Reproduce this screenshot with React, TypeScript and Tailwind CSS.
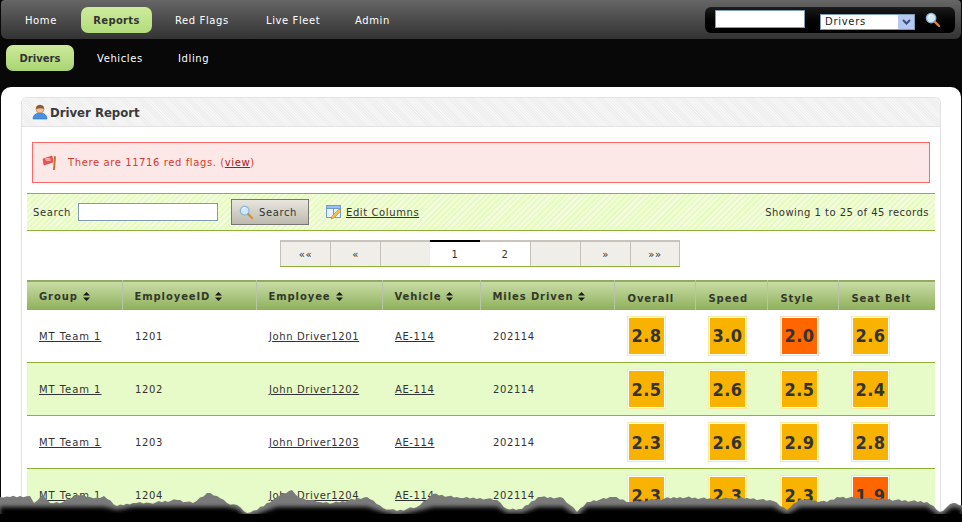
import React from 'react';

const rows = [
  { id: '1201', scores: ['2.8', '3.0', '2.0', '2.6'] },
  { id: '1202', scores: ['2.5', '2.6', '2.5', '2.4'] },
  { id: '1203', scores: ['2.3', '2.6', '2.9', '2.8'] },
  { id: '1204', scores: ['2.3', '2.3', '2.3', '1.9'] },
];

// rough outline of the torn paper edge, read off the screenshot
const tear = [
  [0, 497], [10, 497], [30, 496], [34, 503], [42, 495], [50, 503], [63, 502], [77, 495], [90, 497], [100, 498], [104, 496],
  [117, 506], [133, 503], [150, 503], [177, 500], [193, 503], [207, 493], [217, 496], [227, 503], [237, 505], [247, 513],
  [257, 510], [277, 497], [292, 490], [300, 498], [320, 502], [333, 503], [367, 497], [383, 508], [397, 511], [417, 507],
  [433, 494], [460, 498], [480, 498], [497, 500], [507, 509], [522, 509], [538, 497], [563, 498], [577, 512], [587, 502],
  [613, 497], [630, 502], [680, 497], [713, 499], [747, 498], [773, 501], [787, 510], [800, 499], [827, 502], [837, 497],
  [880, 499], [927, 502], [940, 512], [953, 503], [962, 505],
];

const jagged = tear.flatMap(([x, y], i) => {
  const next = tear[i + 1];
  if (!next) return [`${x},${y}`];
  const pts = [`${x},${y}`];
  const steps = Math.floor((next[0] - x) / 3);
  for (let s = 1; s < steps; s++) {
    const t = s / steps;
    const wob = ((i * 7 + s * 13) % 5) * 0.5 - 1;
    pts.push(`${(x + (next[0] - x) * t).toFixed(1)},${(y + (next[1] - y) * t + wob).toFixed(1)}`);
  }
  return pts;
});

// the shadow: thick grey on the peaks, thin in the valleys
const shade = tear.map(([x, y]) => `${x},${Math.max(y + 4, 507)}`);

const SortIcon = () => (
  <svg width="7" height="9" viewBox="0 0 7 9" className="inline-block ml-[5px] align-[-1px]">
    <path d="M3.5 0 7 3.6H0z M0 5.4h7L3.5 9z" fill="#1a1a1a" />
  </svg>
);

const SearchIcon = ({ size = 16 }: { size?: number }) => (
  <svg width={size} height={size} viewBox="0 0 16 16">
    <circle cx="6.5" cy="6.5" r="5" fill="#cfe6fb" stroke="#8db4dc" strokeWidth="1.4" />
    <path d="M4 5a3 3 0 0 1 3-2" stroke="#fff" strokeWidth="1.2" fill="none" />
    <path d="M10.5 10.5 15 15" stroke="#d98a2b" strokeWidth="2.4" strokeLinecap="round" />
  </svg>
);

const Score = ({ value }: { value: string }) => {
  const low = parseFloat(value) <= 2;
  return (
    <div className={`w-[39px] h-[40px] border p-px bg-white ${low ? 'border-[#fcd9b8]' : 'border-[#fde9a0]'}`}>
      <div className={`w-full h-full flex items-center justify-center text-[18px] font-bold text-[#333] tracking-[0.5px] [font-stretch:condensed] ${low ? 'bg-[#ff6600]' : 'bg-[#f8b300]'}`}>
        {value}
      </div>
    </div>
  );
};

const App = () => {
  const headers = ['Group', 'EmployeeID', 'Employee', 'Vehicle', 'Miles Driven'];
  const plain = ['Overall', 'Speed', 'Style', 'Seat Belt'];

  return (
    <div className="w-[962px] h-[522px] relative overflow-hidden bg-[#080808] text-[10px] tracking-[0.6px] text-[#333]" style={{ fontFamily: '"DejaVu Sans", Verdana, sans-serif' }}>
      <div className="h-[39px] mx-px pt-px rounded-b-[6px] rounded-t-[4px] bg-gradient-to-b from-[#666666] to-[#333333] flex items-center">
        <div className="flex items-center text-white">
          <a className="ml-[24px] w-[56px]">Home</a>
          <a className="w-[71px] h-[26px] rounded-[7px] bg-gradient-to-b from-[#cdeb9b] to-[#b3dc7c] text-[#333] font-bold tracking-[0.3px] flex items-center justify-center">Reports</a>
          <a className="ml-[23px] w-[91px]">Red Flags</a>
          <a className="w-[89px]">Live Fleet</a>
          <a>Admin</a>
        </div>
        <div className="ml-auto mr-[6px] w-[250px] h-[26px] rounded-[6px] bg-gradient-to-b from-[#1c1c1c] to-[#000000] flex items-center">
          <input className="ml-[10px] w-[90px] h-[18px] bg-white border border-[#7f9db9] -mt-[2px]" />
          <div className="relative ml-[15px] mt-[3px]">
            <select className="w-[95px] h-[16px] appearance-none bg-white border border-[#7f9db9] text-[10px] pl-[4px] text-[#222] tracking-[0.7px] leading-none">
              <option>Drivers</option>
            </select>
            <div className="absolute right-[1px] top-[1px] w-[16px] h-[14px] bg-[#b4c8f0] flex items-center justify-center">
              <svg width="9" height="6" viewBox="0 0 9 6"><path d="M1 1l3.5 3.500L8 1" stroke="#3a4f80" strokeWidth="2" fill="none" /></svg>
            </div>
          </div>
          <div className="ml-[10px] -mt-[2px]"><SearchIcon size={15} /></div>
        </div>
      </div>

      <div className="h-[48px] flex items-start pt-[6px] text-white">
        <a className="ml-[6px] w-[68px] h-[26px] rounded-[7px] bg-gradient-to-b from-[#cdeb9b] to-[#a9d473] text-[#333] font-bold tracking-[0px] flex items-center justify-center">Drivers</a>
        <a className="ml-[23px] w-[81px] h-[26px] flex items-center">Vehicles</a>
        <a className="h-[26px] flex items-center">Idling</a>
      </div>

      <div className="ml-[1px] mr-[1px] h-[500px] rounded-t-[10px] bg-white pt-[10px] px-[20px]">
        <div className="w-[920px] rounded-t-[6px] border-x border-t border-[#e2e2e2] h-[500px]">
          <div className="h-[29px] rounded-t-[6px] border-b border-[#e2e2e2] bg-[repeating-linear-gradient(45deg,#f6f6f6_0,#f6f6f6_1px,#eeeeee_1px,#eeeeee_2px)] flex items-center pl-[10px]">
            <svg width="16" height="16" viewBox="0 0 16 16">
              <path d="M1 15c0-4 3-6 7-6s7 2 7 6z" fill="#4a90e2" stroke="#2c6cb8" strokeWidth="0.6" />
              <circle cx="8" cy="5" r="4" fill="#f0c49a" stroke="#a8724a" strokeWidth="0.6" />
              <path d="M4 5c0-3 2-4 4-4s4 1 4 4c-2-1-5-1-8 0z" fill="#8a5a32" />
            </svg>
            <span className="ml-[2px] mt-[2px] text-[13px] font-bold text-[#3a3a3a] tracking-[0px] [font-stretch:condensed]">Driver Report</span>
          </div>

          <div className="mt-[15px] mx-[10px] h-[41px] w-[898px] border border-[#f66] bg-[#fde8e8] flex items-center pl-[9px] text-[#d9392f]">
            <svg width="16" height="16" viewBox="0 0 16 16">
              <path d="M1 4l9-3 1 6-9 3z" fill="#ef5350" stroke="#d33" strokeWidth="0.6" />
              <path d="M3 3h5l1 3H4z" fill="#f9a0a0" />
              <path d="M12 1l2 .5L13 15h-2z" fill="#b57a35" />
            </svg>
            <span className="ml-[10px]">There are 11716 red flags. (<a className="underline text-[#a02020]">view</a>)</span>
          </div>

          <div className="mt-[10px] mx-[5px] w-[908px] h-[38px] border-y border-[#8fb339] bg-[repeating-linear-gradient(135deg,#e6fbbf_0,#e6fbbf_2px,#f3fddd_2px,#f3fddd_4px)] flex items-center px-[6px]">
            <span>Search</span>
            <input className="ml-[7px] w-[140px] h-[18px] bg-white border border-[#7f9db9]" />
            <button className="ml-[13px] w-[78px] h-[26px] border border-[#777] bg-gradient-to-b from-[#e8e6df] to-[#bdb9ad] flex items-center pl-[7px] gap-[6px]">
              <SearchIcon size={14} />
              <span>Search</span>
            </button>
            <svg className="ml-[17px]" width="16" height="16" viewBox="0 0 16 16">
              <rect x="0.500" y="1.500" width="14" height="12" fill="#eef4fd" stroke="#6f9bd8" />
              <path d="M0.500 1.500h14v3h-14z M7.500 4.500v9" fill="#9cc0ee" stroke="#6f9bd8" />
              <path d="M5 15l1-3 7-7 2 2-7 7z" fill="#f2c14e" stroke="#b8842a" strokeWidth="0.6" />
            </svg>
            <a className="ml-[4px] underline">Edit Columns</a>
            <span className="ml-auto tracking-[0.47px]">Showing 1 to 25 of 45 records</span>
          </div>

          <div className="mt-[9px] ml-[258px] w-[400px] flex h-[27px] border-b border-[#8fb339]">
            {['««', '«', '', '1', '2', '', '»', '»»'].map((label, i) => {
              const active = label === '1' || label === '2';
              return (
                <div
                  key={i}
                  className={`w-[50px] flex items-center justify-center border-t-2 ${label === '1' ? 'border-t-black' : 'border-t-[#c8c4bc]'} ${active ? 'bg-white' : 'bg-[#f0eee9] border-l border-[#c4c0b8]'} ${i === 7 ? 'border-r' : ''} ${i === 5 ? 'border-l' : ''}`}
                >
                  {label}
                </div>
              );
            })}
          </div>

          <table className="mt-[13px] ml-[5px] w-[908px] table-fixed border-collapse">
            <colgroup>
              <col className="w-[95px]" /><col className="w-[134px]" /><col className="w-[126px]" /><col className="w-[98px]" />
              <col className="w-[134px]" /><col className="w-[81px]" /><col className="w-[72px]" /><col className="w-[71px]" /><col className="w-[97px]" />
            </colgroup>
            <thead>
              <tr className="h-[29px] bg-gradient-to-b from-[#c9dca6] to-[#8fb05a] border-t border-[#8fa860] font-bold text-[#33392a] tracking-[0.9px]">
                {headers.map((h) => (
                  <th key={h} className="text-left font-bold pl-[12px] pt-[3px] border-r border-[#b7c4a8]">
                    {h}<SortIcon />
                  </th>
                ))}
                {plain.map((h, i) => (
                  <th key={h} className={`text-left font-bold pl-[13px] pt-[6px] ${i < 3 ? 'border-r border-[#b7c4a8]' : ''}`}>
                    {h}
                  </th>
                ))}
              </tr>
            </thead>
            <tbody>
              {rows.map((r, i) => (
                <tr key={r.id} className={`h-[53px] border-b border-[#8fb339] ${i % 2 ? 'bg-[#e6fbc8]' : 'bg-white'}`}>
                  <td className="pl-[12px] pt-[1px]"><a className="underline tracking-[0.95px]">MT Team 1</a></td>
                  <td className="pl-[13px] pt-[1px]">{r.id}</td>
                  <td className="pl-[13px] pt-[1px]"><a className="underline">John Driver{r.id}</a></td>
                  <td className="pl-[13px] pt-[1px]"><a className="underline">AE-114</a></td>
                  <td className="pl-[13px] pt-[1px]">202114</td>
                  {r.scores.map((s, k) => (
                    <td key={k} className="pl-[13px]"><Score value={s} /></td>
                  ))}
                </tr>
              ))}
            </tbody>
          </table>
        </div>
      </div>

      {/* torn bottom edge lying over the page */}
      <svg className="absolute left-0 top-0" width="962" height="522" viewBox="0 0 962 522">
        <defs>
          <filter id="tearBlur" x="-5%" y="-50%" width="110%" height="200%"><feGaussianBlur stdDeviation="2" /></filter>
        </defs>
        <polygon points={`${jagged.join(' ')} 962,522 0,522`} fill="#7a7a7a" />
        <g filter="url(#tearBlur)">
          <polygon points={`${shade.join(' ')} 962,530 0,530`} fill="#000" />
        </g>
        <rect x="0" y="514" width="962" height="8" fill="#000" />
      </svg>
    </div>
  );
};

export default App;
